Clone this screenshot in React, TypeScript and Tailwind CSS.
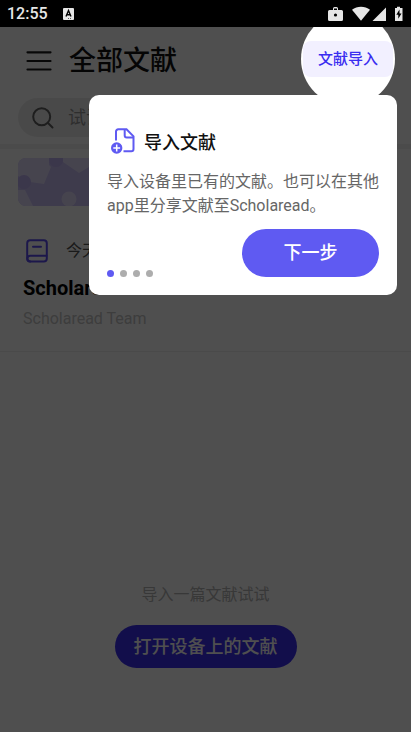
import type { ReactNode } from 'react';

const STEPS = 4;

function StatusBar() {
    return (
        <div className="flex h-[27px] items-center justify-between bg-black px-[7px] text-[#e6e6e6]">
            <div className="flex items-center gap-[15px] pt-px">
                <span className="font-medium">12:55</span>
                <svg viewBox="0 0 11 12" className="h-3 w-[11px]">
                    <rect width="11" height="12" rx="1" fill="currentColor" />
                    <path d="M3 8.500 5.500 2.500 8 8.500M3.800 6.800h3.400" fill="none" stroke="#000" strokeWidth="1.400" />
                    <path d="M5 10.500h1M7 10.500h1" stroke="#000" strokeWidth="0.600" />
                </svg>
            </div>
            <svg viewBox="0 0 76 16" className="h-4 w-[76px]" fill="currentColor">
                <path d="M1.500 4H5V2.500A1.500 1.500 0 0 1 6.500 1h2A1.500 1.500 0 0 1 10 2.500V4h3.500a1.500 1.500 0 0 1 1.500 1.500v8a1.500 1.500 0 0 1-1.500 1.500h-12A1.500 1.500 0 0 1 0 13.500v-8A1.500 1.500 0 0 1 1.500 4ZM6 4h3V2.500H6Z" />
                <circle cx="7.500" cy="9" r="1.600" fill="#000" />
                <path d="M24 3.800C29 -.2 37 -.2 42 3.800L33 14.700Z" />
                <path d="M58 1.500V15H44.500Z" />
                <path d="M67 2h2V.7h3V2h2.500v13H67Z" />
                <path d="M71.500 3.400 68.300 8.800h2v4l3.200-5.400h-2Z" fill="#000" />
            </svg>
        </div>
    );
}

function MenuIcon() {
    return (
        <svg viewBox="0 0 26 20" className="h-5 w-[26px]" stroke="#1c1c1c" strokeWidth="2.200" strokeLinecap="round">
            <path d="M1.500 1.300h23M1.500 10h23M1.500 18.500h23" />
        </svg>
    );
}

function SearchIcon() {
    return (
        <svg viewBox="0 0 22 22" className="size-[22px] shrink-0" fill="none" stroke="#606060" strokeWidth="2" strokeLinecap="round">
            <circle cx="9.700" cy="9.700" r="8.500" />
            <path d="m16 16 4.500 4.500" />
        </svg>
    );
}

function BookIcon() {
    return (
        <svg viewBox="0 0 22 24" className="h-6 w-[22px]" fill="none" stroke="#5b4cf0" strokeWidth="2" strokeLinecap="round">
            <rect x="1.200" y="1.200" width="19.600" height="21.300" rx="3" />
            <path d="M7 7.700h8M20.500 16.700H4.300a2.900 2.900 0 0 0 0 5.800" />
        </svg>
    );
}

function ImportIcon() {
    return (
        <svg viewBox="0 0 24 26" className="h-[26px] w-6" fill="none" stroke="#5f5af2" strokeWidth="2">
            <path d="M5 12.500V3.500A2.200 2.200 0 0 1 7.200 1.300h8.300L22.500 8.300v12.700a2.200 2.200 0 0 1-2.200 2.200H12.500" />
            <path d="M13.700 1.500V7.500a2 2 0 0 0 2 2h6.800" />
            <circle cx="5.700" cy="20" r="5.700" fill="#5f5af2" stroke="none" />
            <path d="M5.700 16.600v6.800M2.300 20h6.800" stroke="#fff" strokeWidth="1.500" />
        </svg>
    );
}

// Pale blobs over a lavender strip
function Banner() {
    return (
        <div className="mx-[18px] h-12 overflow-hidden rounded-lg bg-[#c8bdf5]">
            <svg viewBox="0 0 375 48" preserveAspectRatio="xMinYMid slice" className="h-full w-full">
                <path d="M0 0h31v7l2 2-7 17-14-2L0 18ZM0 32h7l8 16H0Z" fill="#e2dcfc" />
                <path d="M45 0v4l16 11 10-6 14-9ZM120 48l20-30 30 10 10 20Z" fill="#e2dcfc" />
                <circle cx="38" cy="2" r="7" fill="#bdb0f2" />
                <circle cx="51" cy="41" r="7.500" fill="#e2dcfc" />
                <circle cx="6" cy="24" r="7" fill="#bdb0f2" />
                <path d="M230 0h60l-20 26-30-6Z" fill="#e2dcfc" />
            </svg>
        </div>
    );
}

function Spotlight({ children }: { children: ReactNode }) {
    return (
        <div className="relative isolate z-10">
            <div className="absolute left-1/2 top-1/2 -z-10 size-[94px] -translate-x-1/2 -translate-y-1/2 rounded-full bg-white shadow-[0_0_0_2000px_rgba(0,0,0,0.69)]" />
            {children}
        </div>
    );
}

function GuideCard({ step }: { step: number }) {
    return (
        <section
            role="dialog"
            aria-labelledby="guide-title"
            className="absolute left-[89px] right-[14px] top-[68px] z-20 rounded-[10px] bg-white px-[18px] pb-[18px] pt-[30px]"
        >
            <div className="flex items-center gap-[9px] pl-1">
                <ImportIcon />
                <h2 id="guide-title" className="pt-1 text-lg font-medium text-[#111]">导入文献</h2>
            </div>
            <p className="mt-[13px] text-[#666]">
                导入设备里已有的文献。也可以在其他app里分享文献至Scholaread。
            </p>
            <div className="mt-[11px] flex items-end justify-between">
                <div className="flex gap-[6px]">
                    {Array.from({ length: STEPS }, (_, i) => (
                        <span
                            key={i}
                            className={i === step ? 'size-[7px] rounded-full bg-[#5f5af2]' : 'size-[7px] rounded-full bg-[#adadad]'}
                        />
                    ))}
                </div>
                <button className="h-12 w-[137px] rounded-full bg-[#5f5af2] text-lg font-medium text-white">下一步</button>
            </div>
        </section>
    );
}

export default function App() {
    return (
        <div className="flex min-h-screen flex-col bg-white font-['Roboto','Noto_Sans_CJK_SC',sans-serif] text-base">
            <StatusBar />
            <main className="relative flex flex-1 flex-col overflow-hidden">
                {/* Header */}
                <header className="border-b-[5px] border-[#f3f3f3] pb-[7px]">
                    <div className="flex h-16 items-center pl-[26px] pr-[18px]">
                        <button aria-label="菜单" className="pt-1">
                            <MenuIcon />
                        </button>
                        <h1 className="ml-[17px] flex-1 pt-1 text-[27px] font-medium text-[#111]">全部文献</h1>
                        <Spotlight>
                            <button className="block h-9 w-[90px] rounded-lg bg-[#f2f0ff] text-[15px] font-medium text-[#3a2df0]">
                                文献导入
                            </button>
                        </Spotlight>
                    </div>
                    <label className="mx-[18px] mt-[7px] flex h-[39px] items-center gap-[14px] rounded-full bg-[#ececec] pl-[14px]">
                        <SearchIcon />
                        <input
                            type="search"
                            aria-label="搜索"
                            placeholder="试试搜索文献"
                            className="min-w-0 flex-1 bg-transparent text-lg outline-none placeholder:text-[#959595]"
                        />
                    </label>
                </header>

                <div className="pt-[9px]">
                    <Banner />
                </div>

                {/* Document list */}
                <article className="border-b border-[#eee] px-[23px] pb-5 pt-[33px]">
                    <div className="flex items-center gap-[18px] pl-[3px]">
                        <BookIcon />
                        <span className="text-[#555]">今天</span>
                    </div>
                    <h3 className="mt-[11px] text-xl font-bold text-black">Scholaread</h3>
                    <p className="mt-[5px] text-[#c4c4c4]">Scholaread Team</p>
                </article>

                <div className="flex flex-1 flex-col items-center justify-end pb-16">
                    <p className="text-[#b4b4b4]">导入一篇文献试试</p>
                    <button className="mt-[18px] h-[43px] rounded-full bg-[#3a2df0] px-[19px] text-lg font-medium text-white">
                        打开设备上的文献
                    </button>
                </div>

                <GuideCard step={0} />
            </main>
        </div>
    );
}
